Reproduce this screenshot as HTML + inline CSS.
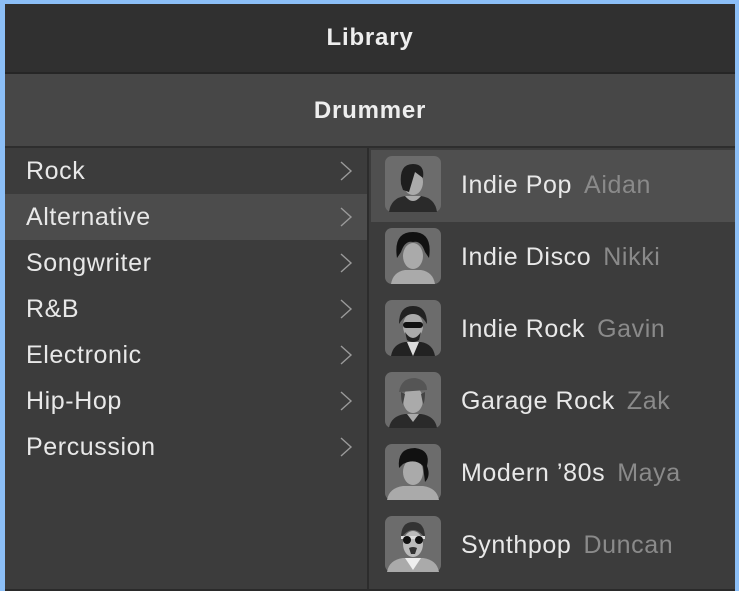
<!DOCTYPE html>
<html><head><style>
*{margin:0;padding:0;box-sizing:border-box}
body{width:739px;height:591px;background:#8cbff7;position:relative;overflow:hidden;font-family:"Liberation Sans",sans-serif}
.win{position:absolute;left:5px;top:4px;width:730px;height:587px;background:#3c3c3c;border-bottom:2px solid #2a2a2a}
.h1{position:absolute;left:0;top:0;width:730px;height:70px;background:#303030;border-bottom:2px solid #262626;color:#eee;font-weight:bold;font-size:24px;letter-spacing:0.8px;text-align:center;line-height:68px}
.h2{position:absolute;left:0;top:70px;width:730px;height:74px;background:#474747;border-bottom:2px solid #2e2e2e;color:#eee;font-weight:bold;font-size:24px;letter-spacing:0.8px;text-align:center;line-height:74px}
.left{position:absolute;left:0;top:144px;width:364px;height:441px;background:#3c3c3c;border-right:2px solid #2c2c2c}
.row{height:46px;line-height:46px;color:#e8e8e8;font-size:25px;letter-spacing:0.6px;padding-left:21px;position:relative}
.row.sel{background:#4c4c4c}
.row svg{position:absolute;left:334px;top:12px}
.right{position:absolute;left:366px;top:146px;width:364px}
.d{height:72px;position:relative;color:#e8e8e8;font-size:25px;letter-spacing:0.6px}
.d.sel{background:#4f4f4f}
.d .av{position:absolute;left:14px;top:6px}
.d span{position:absolute;left:90px;top:0;line-height:70px;white-space:nowrap}
.d i{font-style:normal;color:#8a8a8a;margin-left:12px}
</style></head><body>
<div class="win">
<div class="h1">Library</div>
<div class="h2">Drummer</div>
<div class="left">
<div class="row">Rock<svg width="14" height="22"><path d="M2 2 L12 11 L2 20" fill="none" stroke="#9a9a9a" stroke-width="1.4"/></svg></div>
<div class="row sel">Alternative<svg width="14" height="22"><path d="M2 2 L12 11 L2 20" fill="none" stroke="#9a9a9a" stroke-width="1.4"/></svg></div>
<div class="row">Songwriter<svg width="14" height="22"><path d="M2 2 L12 11 L2 20" fill="none" stroke="#9a9a9a" stroke-width="1.4"/></svg></div>
<div class="row">R&amp;B<svg width="14" height="22"><path d="M2 2 L12 11 L2 20" fill="none" stroke="#9a9a9a" stroke-width="1.4"/></svg></div>
<div class="row">Electronic<svg width="14" height="22"><path d="M2 2 L12 11 L2 20" fill="none" stroke="#9a9a9a" stroke-width="1.4"/></svg></div>
<div class="row">Hip-Hop<svg width="14" height="22"><path d="M2 2 L12 11 L2 20" fill="none" stroke="#9a9a9a" stroke-width="1.4"/></svg></div>
<div class="row">Percussion<svg width="14" height="22"><path d="M2 2 L12 11 L2 20" fill="none" stroke="#9a9a9a" stroke-width="1.4"/></svg></div>
</div>
<div class="right">
<div class="d sel"><svg class="av" width="56" height="56"><rect width="56" height="56" rx="7" fill="#6c6c6c"/><path d="M4 56 Q6 42 20 40 L36 40 Q50 42 52 56Z" fill="#2a2a2a"/><path d="M20 40 Q28 50 36 40Z" fill="#aaa"/><ellipse cx="28" cy="26" rx="10" ry="13" fill="#aaa"/><path d="M16 28 Q14 8 28 8 Q40 8 38 22 L30 16 L24 36 L18 34Z" fill="#1e1e1e"/></svg><span>Indie Pop<i>Aidan</i></span></div>
<div class="d"><svg class="av" width="56" height="56"><rect width="56" height="56" rx="7" fill="#6c6c6c"/><path d="M6 56 Q8 44 20 42 L36 42 Q48 44 50 56Z" fill="#aaa"/><ellipse cx="28" cy="28" rx="10" ry="13" fill="#aaa"/><path d="M12 30 Q8 4 28 4 Q48 4 44 30 L40 24 Q36 12 28 14 Q20 12 16 24Z" fill="#111"/></svg><span>Indie Disco<i>Nikki</i></span></div>
<div class="d"><svg class="av" width="56" height="56"><rect width="56" height="56" rx="7" fill="#6c6c6c"/><path d="M6 56 Q8 44 20 42 L36 42 Q48 44 50 56Z" fill="#222"/><path d="M22 42 L28 56 L34 42Z" fill="#ddd"/><ellipse cx="28" cy="26" rx="10" ry="13" fill="#aaa"/><path d="M14 24 Q14 6 28 6 Q42 6 42 24 Q36 14 28 14 Q20 14 14 24Z" fill="#222"/><rect x="18" y="22" width="20" height="6" rx="3" fill="#111"/><path d="M20 32 Q28 44 36 32 L34 40 Q28 44 22 40Z" fill="#222"/></svg><span>Indie Rock<i>Gavin</i></span></div>
<div class="d"><svg class="av" width="56" height="56"><rect width="56" height="56" rx="7" fill="#6c6c6c"/><path d="M4 56 Q6 44 20 42 L36 42 Q50 44 52 56Z" fill="#2a2a2a"/><path d="M22 42 L28 50 L34 42Z" fill="#aaa"/><ellipse cx="28" cy="28" rx="10" ry="13" fill="#aaa"/><path d="M14 20 Q16 6 30 6 Q42 8 42 18 Z" fill="#555"/><path d="M16 20 Q16 30 18 32 L20 22Z M40 20 Q40 30 38 32 L36 22Z" fill="#444"/></svg><span>Garage Rock<i>Zak</i></span></div>
<div class="d"><svg class="av" width="56" height="56"><rect width="56" height="56" rx="7" fill="#6c6c6c"/><path d="M2 56 Q4 44 18 42 L38 42 Q52 44 54 56Z" fill="#aaa"/><ellipse cx="28" cy="28" rx="10" ry="13" fill="#aaa"/><path d="M14 24 Q12 4 30 4 Q46 6 42 22 Q46 32 40 38 L38 22 Q30 14 18 20Z" fill="#111"/></svg><span>Modern ’80s<i>Maya</i></span></div>
<div class="d"><svg class="av" width="56" height="56"><rect width="56" height="56" rx="7" fill="#6c6c6c"/><path d="M2 56 Q4 44 18 42 L38 42 Q52 44 54 56Z" fill="#aaa"/><path d="M20 42 L28 54 L36 42Z" fill="#eee"/><ellipse cx="28" cy="28" rx="10" ry="13" fill="#bbb"/><path d="M16 22 Q16 6 28 6 Q40 6 40 22 Q34 14 28 14 Q22 14 16 22Z" fill="#333"/><rect x="16" y="20" width="24" height="3" fill="#ddd"/><circle cx="22" cy="24" r="4" fill="#111"/><circle cx="34" cy="24" r="4" fill="#111"/><path d="M24 32 Q28 30 32 32 L30 38 L26 38Z" fill="#333"/></svg><span>Synthpop<i>Duncan</i></span></div>
</div>
</div>
</body></html>
